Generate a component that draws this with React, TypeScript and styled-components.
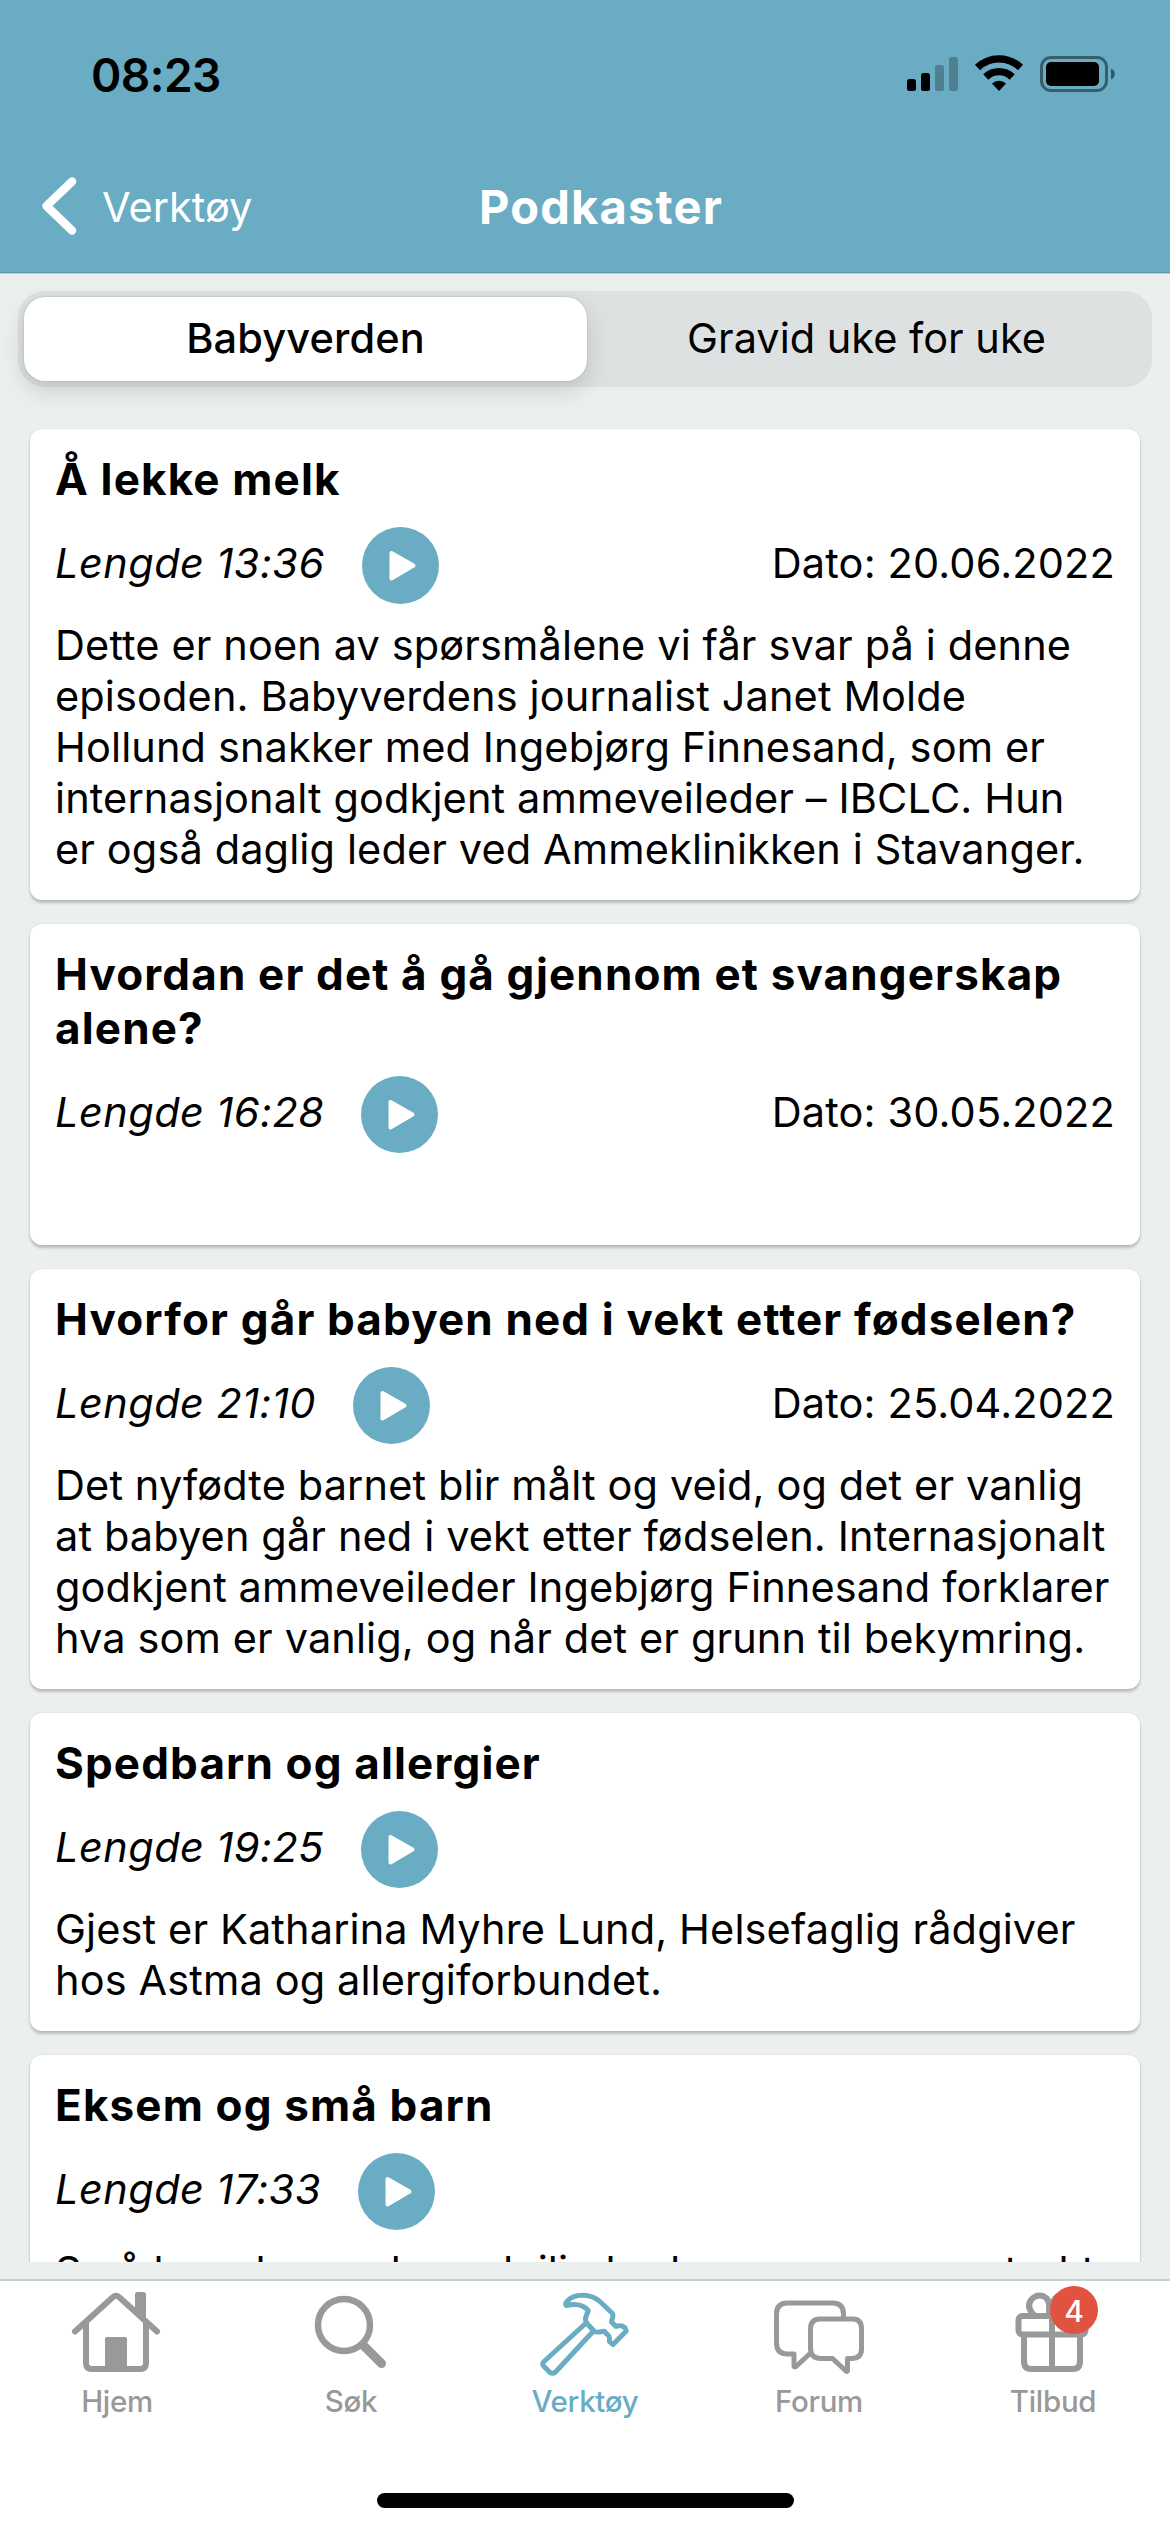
import React from "react";
import styled, { createGlobalStyle, css } from "styled-components";

const teal = "#69acc3";
const grey = "#999999";

const Global = createGlobalStyle`
  * { box-sizing: border-box; }
  body { margin: 0; background: #ebefee; }
`;

const Screen = styled.div`
  width: 1170px;
  height: 2532px;
  display: flex;
  flex-direction: column;
  overflow: hidden;
  background: #ebefee;
  color: #000;
  font-family: Inter, "Liberation Sans", sans-serif;
`;

const Header = styled.header`
  height: 273px;
  flex: none;
  background: ${teal};
  border-bottom: 1px solid #5b94a9;
  box-shadow: 0 1px 0 #c3d0d2;
`;

const StatusBar = styled.div`
  height: 141px;
  padding: 8px 55px 0 91px;
  display: flex;
  align-items: center;
  justify-content: space-between;
  svg { display: block; margin-top: 2px; }
`;

const Clock = styled.span`
  font-size: 46px;
  font-weight: 600;
  letter-spacing: -0.5px;
`;

const NavBar = styled.div`
  height: 131px;
  display: grid;
  grid-template-columns: 479px 1fr;
  align-items: center;
`;

const Back = styled.a`
  padding-left: 41px;
  display: flex;
  align-items: center;
  gap: 25px;
  color: #fff;
  font-size: 41.5px;
  svg { display: block; margin-bottom: 2px; }
`;

const NavTitle = styled.h1`
  margin: 0;
  color: #fff;
  font-size: 47px;
  font-weight: 700;
  letter-spacing: 1.2px;
`;

const Segments = styled.div`
  flex: none;
  height: 96px;
  margin: 18px 18px 0;
  padding: 6px;
  display: grid;
  grid-template-columns: 563px 1fr;
  border-radius: 27px;
  background: #dde1e1;
`;

const Segment = styled.button<{ $active?: boolean }>`
  border: 0;
  padding: 0 0 2px;
  background: transparent;
  border-radius: 21px;
  font-family: inherit;
  font-size: 41.5px;
  color: #000;
  ${(p) => p.$active && css`
    background: #fff;
    font-weight: 500;
    letter-spacing: 0.15px;
    box-shadow: 0 0 2px rgba(0, 0, 0, 0.2), 0 9px 24px rgba(0, 0, 0, 0.14);
  `}
`;

const List = styled.main`
  flex: none;
  height: 1875px;
  padding: 42px 30px 0;
  overflow: hidden;
  display: flex;
  flex-direction: column;
  gap: 24px;
`;

const Card = styled.article`
  flex: none;
  padding: 23px 25px 25px;
  background: #fff;
  border-radius: 12px;
  box-shadow: 0 3px 3px rgba(0, 0, 0, 0.2), 0 0 2px rgba(0, 0, 0, 0.12);
`;

const CardTitle = styled.h2`
  margin: 0;
  font-size: 44px;
  line-height: 54px;
  font-weight: 700;
  letter-spacing: 1.15px;
  white-space: pre;
`;

const Meta = styled.div`
  height: 78px;
  margin: 20px 0 16px;
  display: flex;
  align-items: center;
  font-size: 41.5px;
`;

const Length = styled.em`
  padding-bottom: 4px;
  font-style: italic;
  letter-spacing: 0.45px;
`;

const Play = styled.button`
  width: 77px;
  height: 77px;
  margin-left: 37px;
  padding: 0;
  border: 0;
  border-radius: 50%;
  background: ${teal};
  display: grid;
  place-items: center;
  svg { display: block; }
`;

const DateText = styled.span`
  margin-left: auto;
  padding-bottom: 4px;
  letter-spacing: 0.15px;
`;

const Description = styled.p`
  margin: 0;
  min-height: 51px;
  font-size: 41.5px;
  line-height: 51px;
  letter-spacing: 0.12px;
  white-space: pre;
`;

const TabBar = styled.nav`
  flex: none;
  margin-top: 17px;
  height: 253px;
  border-top: 2px solid #cdcfcf;
  background: #fff;
  display: flex;
  flex-direction: column;
  align-items: center;
`;

const Tabs = styled.div`
  width: 100%;
  height: 212px;
  display: grid;
  grid-template-columns: repeat(5, 1fr);
`;

const Tab = styled.a<{ $active?: boolean }>`
  position: relative;
  display: flex;
  flex-direction: column;
  align-items: center;
  color: ${(p) => (p.$active ? teal : grey)};
  font-size: 29.5px;
  line-height: 36px;
  font-weight: 500;
  letter-spacing: -0.3px;
  svg { display: block; margin: 6px 0 8px; overflow: visible; }
`;

const Badge = styled.span`
  position: absolute;
  left: 114px;
  top: 5px;
  width: 48px;
  height: 48px;
  border-radius: 50%;
  background: #e25241;
  color: #fff;
  font-size: 30px;
  line-height: 50px;
  text-align: center;
`;

const HomeIndicator = styled.div`
  width: 417px;
  height: 15px;
  border-radius: 8px;
  background: #000;
`;

const StatusIcons = () => (
  <svg width="210" height="43" viewBox="905 54 210 43">
    <rect x="907" y="79" width="9" height="12" rx="2.5" />
    <rect x="921" y="73" width="9" height="18" rx="2.5" />
    <g opacity=".25">
      <rect x="935" y="65" width="9" height="26" rx="2.5" />
      <rect x="949" y="57" width="9" height="34" rx="2.5" />
    </g>
    <g fill="none" stroke="#000" strokeWidth="7.4">
      <path d="M977.5 67.500a31 31 0 0 1 43 0" />
      <path d="M985.800 77a19 19 0 0 1 26.400 0" />
    </g>
    <path d="M992 83.500a10.500 10.500 0 0 1 14 0L999 91z" />
    <rect x="1041.5" y="57.5" width="65" height="33" rx="9.5" fill="none" stroke="#000" strokeOpacity=".45" strokeWidth="3" />
    <rect x="1046" y="62" width="53" height="24" rx="5" />
    <path d="M1111 68.500c5 2 5 9 0 11z" opacity=".5" />
  </svg>
);

const HomeIcon = () => (
  <svg width="96" height="88" viewBox="69 2287 96 88" fill="none" stroke="currentColor" strokeWidth="6" strokeLinecap="round" strokeLinejoin="round">
    <path d="M75 2331.500L113 2297q3-2.500 6 0L157 2331.500" />
    <path d="M86 2323v40q0 6 6 6h48q6 0 6-6v-40" />
    <path d="M105 2370v-31q0-2 2-2h18q2 0 2 2v31z" fill="currentColor" stroke="none" />
    <path d="M135 2309v-14.500q0-2.500 2.500-2.500h6q2.500 0 2.500 2.500V2320z" fill="currentColor" stroke="none" />
  </svg>
);

const SearchIcon = () => (
  <svg width="96" height="88" viewBox="303 2287 96 88" fill="none" stroke="currentColor">
    <circle cx="344" cy="2325" r="26" strokeWidth="6.500" />
    <path d="M363.500 2345.500L381.500 2363.500" strokeWidth="9" strokeLinecap="round" />
  </svg>
);

const HammerIcon = () => (
  <svg width="96" height="88" viewBox="537 2287 96 88" fill="none" stroke="currentColor" strokeWidth="5" strokeLinecap="round" strokeLinejoin="round">
    <path d="M566.500 2305.500Q564.500 2304 567 2301.500C573 2294.500 580 2295.300 584 2295.300Q594 2296 600.500 2302L612 2313Q613.500 2315 612.500 2318L611.500 2322L616 2326.500Q622 2324.500 625 2328L626.300 2331L613 2344.500L609.500 2341.500Q610 2335 606 2333.500Q605 2330.500 602 2331.500Q595 2333 594 2331L587 2323.500Q584.500 2320 586 2316.500L588.300 2310.500Q581 2302 566.500 2305.500Z" />
    <path d="M585 2324L544 2361.500Q541.500 2364 544 2366.500L549.500 2372Q552.500 2374.500 555.500 2372L593 2331.500" />
  </svg>
);

const ForumIcon = () => (
  <svg width="96" height="88" viewBox="771 2287 96 88" fill="none" stroke="currentColor" strokeWidth="5" strokeLinejoin="round" strokeLinecap="round">
    <path d="M843.500 2317v-3q0-11-11-11h-45q-11 0-11 11v29q0 11 11 11h6.500v12.500q1 .500 2 0l14-13" />
    <path d="M821 2319h32q8.500 0 8.500 10v20q0 9.500-10 9.500h-4v12.500l-1 .500-14-13h-11.500q-10.500 0-10.500-10.500v-19q0-10 9.500-10z" />
  </svg>
);

const GiftIcon = () => (
  <svg width="96" height="88" viewBox="1005 2287 96 88" fill="none" stroke="currentColor" strokeWidth="6" strokeLinejoin="round">
    <path d="M1034 2315q-8-8-3-15 5-6 12-4 7 3 6 12v8" />
    <path d="M1052 2308c0-16 18-17 20-5q0 8-5 13" />
    <rect x="1018.500" y="2316" width="67" height="18.500" rx="4" />
    <path d="M1024 2335v26q0 8 7 8h42q7 0 7-8v-26M1052 2306v63" />
  </svg>
);

const episodes = [
  {
    title: "Å lekke melk",
    length: "13:36",
    date: "20.06.2022",
    text: "Dette er noen av spørsmålene vi får svar på i denne\nepisoden. Babyverdens journalist Janet Molde\nHollund snakker med Ingebjørg Finnesand, som er\ninternasjonalt godkjent ammeveileder – IBCLC. Hun\ner også daglig leder ved Ammeklinikken i Stavanger.",
  },
  {
    title: "Hvordan er det å gå gjennom et svangerskap\nalene?",
    length: "16:28",
    date: "30.05.2022",
    text: "",
  },
  {
    title: "Hvorfor går babyen ned i vekt etter fødselen?",
    length: "21:10",
    date: "25.04.2022",
    text: "Det nyfødte barnet blir målt og veid, og det er vanlig\nat babyen går ned i vekt etter fødselen. Internasjonalt\ngodkjent ammeveileder Ingebjørg Finnesand forklarer\nhva som er vanlig, og når det er grunn til bekymring.",
  },
  {
    title: "Spedbarn og allergier",
    length: "19:25",
    date: "",
    text: "Gjest er Katharina Myhre Lund, Helsefaglig rådgiver\nhos Astma og allergiforbundet.",
  },
  {
    title: "Eksem og små barn",
    length: "17:33",
    date: "",
    text: "Små barn har myk og deilig hud, men noe som sterkt",
  },
];

export default function App() {
  return (
    <Screen>
      <Global />
      <Header>
        <StatusBar>
          <Clock>08:23</Clock>
          <StatusIcons />
        </StatusBar>
        <NavBar>
          <Back>
            <svg width="36" height="60" viewBox="0 0 36 60" fill="none" stroke="#fff" strokeWidth="8.500" strokeLinecap="round" strokeLinejoin="round">
              <path d="M31 5.500L5.500 30L31 54.500" />
            </svg>
            Verktøy
          </Back>
          <NavTitle>Podkaster</NavTitle>
        </NavBar>
      </Header>
      <Segments>
        <Segment $active>Babyverden</Segment>
        <Segment>Gravid uke for uke</Segment>
      </Segments>
      <List>
        {episodes.map((e) => (
          <Card key={e.title}>
            <CardTitle>{e.title}</CardTitle>
            <Meta>
              <Length>Lengde {e.length}</Length>
              <Play aria-label="Spill av">
                <svg width="77" height="77" viewBox="0.5 0.5 77 77">
                  <path d="M30 26.500L52 39L30 52z" fill="#fff" stroke="#fff" strokeWidth="4" strokeLinejoin="round" />
                </svg>
              </Play>
              {e.date && <DateText>Dato: {e.date}</DateText>}
            </Meta>
            <Description>{e.text}</Description>
          </Card>
        ))}
      </List>
      <TabBar>
        <Tabs>
          <Tab><HomeIcon />Hjem</Tab>
          <Tab><SearchIcon />Søk</Tab>
          <Tab $active><HammerIcon />Verktøy</Tab>
          <Tab><ForumIcon />Forum</Tab>
          <Tab><GiftIcon />Tilbud<Badge>4</Badge></Tab>
        </Tabs>
        <HomeIndicator />
      </TabBar>
    </Screen>
  );
}
